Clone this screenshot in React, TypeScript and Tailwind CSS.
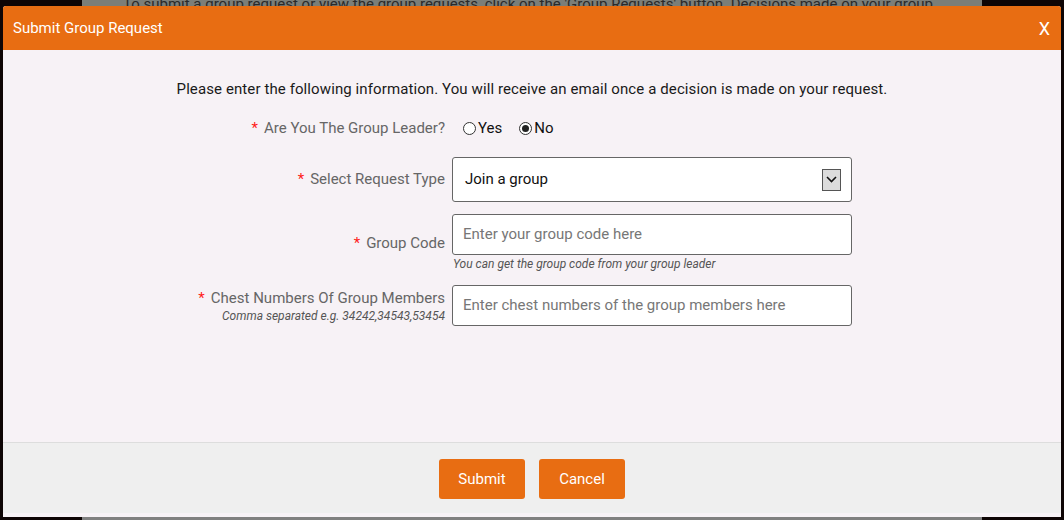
import React, { useState } from 'react';

const font = { fontFamily: 'Roboto, "Liberation Sans", sans-serif' };

const Req: React.FC = () => <span className="text-[#ff1a1a] mr-[6px]">*</span>;

const Radio: React.FC<{ checked: boolean; label: string; onClick: () => void }> = ({ checked, label, onClick }) => (
  <label className="flex items-center cursor-pointer" onClick={onClick}>
    <span className="w-[13px] h-[13px] rounded-full border border-[#333] bg-white flex items-center justify-center mr-[2px]">
      {checked && <span className="w-[7px] h-[7px] rounded-full bg-[#222]" />}
    </span>
    <span className="text-[15px] text-[#111]">{label}</span>
  </label>
);

const App: React.FC = () => {
  const [leader, setLeader] = useState<'yes' | 'no'>('no');

  return (
    <div className="relative w-[1064px] h-[520px] overflow-hidden bg-[#0e0505]" style={font}>
      {/* page behind the overlay */}
      <div className="ml-[82px] w-[900px] h-full bg-[#7b7e78]">
        <div className="-mt-[7px] pl-[41px] text-[15px] text-[#2a2a2a] whitespace-nowrap">
          To submit a group request or view the group requests, click on the 'Group Requests' button. Decisions made on your group
        </div>
      </div>
      <div className="absolute left-[82px] bottom-0 w-[900px] h-[3px] bg-[#808080]" />

      {/* Modal */}
      <div className="absolute left-[3px] top-[6px] w-[1058px] h-[511px] bg-[#f7f2f6] rounded-t-[3px] flex flex-col overflow-hidden">
        <div className="h-[44px] bg-[#e86d12] flex items-center justify-between pl-[10px] pr-[11px] text-white">
          <span className="text-[15px]">Submit Group Request</span>
          <span className="text-[18px] mt-px">X</span>
        </div>

        <div className="flex-1 flex flex-col">
          <p className="text-center text-[15px] text-[#1a1a1a] mt-[28px] leading-[22px] tracking-[0.1px]">
            Please enter the following information. You will receive an email once a decision is made on your request.
          </p>

          {/* leader */}
          <div className="flex items-center mt-[17px] h-[22px]">
            <div className="w-[442px] text-right text-[15px] text-[#666]">
              <Req />Are You The Group Leader?
            </div>
            <div className="flex items-center gap-[17px] ml-[18px]">
              <Radio checked={leader === 'yes'} label="Yes" onClick={() => setLeader('yes')} />
              <Radio checked={leader === 'no'} label="No" onClick={() => setLeader('no')} />
            </div>
          </div>

          {/* request type */}
          <div className="flex items-center mt-[18px]">
            <div className="w-[442px] text-right text-[15px] text-[#666]">
              <Req />Select Request Type
            </div>
            <div className="ml-[7px] w-[400px] h-[45px] bg-white border border-[#666] rounded-[3px] flex items-center justify-between pl-[12px] pr-[10px]">
              <span className="text-[15px] text-[#111]">Join a group</span>
              <span className="w-[19px] h-[22px] bg-[#dcdcdc] border border-[#555] flex items-center justify-center">
                <svg width="11" height="7" viewBox="0 0 11 7" fill="none">
                  <path d="M1 1l4.5 4.5L10 1" stroke="#111" strokeWidth="1.6" />
                </svg>
              </span>
            </div>
          </div>

          {/* group code */}
          <div className="flex items-center mt-[12px]">
            <div className="w-[442px] text-right text-[15px] text-[#666]">
              <Req />Group Code
            </div>
            <div className="ml-[7px] w-[400px]">
              <div className="h-[41px] bg-white border border-[#666] rounded-[3px] flex items-center px-[10px]">
                <span className="text-[15px] text-[#777]">Enter your group code here</span>
              </div>
              <div className="text-[12px] italic text-[#555] pl-px leading-[18px]">
                You can get the group code from your group leader
              </div>
            </div>
          </div>

          {/* chest numbers */}
          <div className="flex items-center mt-[12px]">
            <div className="w-[442px] text-right">
              <div className="text-[15px] text-[#666] leading-[20px]">
                <Req />Chest Numbers Of Group Members
              </div>
              <div className="text-[12px] italic text-[#555] leading-[16px]">
                Comma separated e.g. 34242,34543,53454
              </div>
            </div>
            <div className="ml-[7px] w-[400px] h-[41px] bg-white border border-[#666] rounded-[3px] flex items-center px-[10px]">
              <span className="text-[15px] text-[#777]">Enter chest numbers of the group members here</span>
            </div>
          </div>
        </div>

        <div className="h-[71px] bg-[#efefef] border-t border-[#dddddd] flex items-center justify-center gap-[14px] pt-[2px]">
          <button className="w-[86px] h-[40px] bg-[#e86d12] text-white text-[15px] rounded-[3px]">Submit</button>
          <button className="w-[86px] h-[40px] bg-[#e86d12] text-white text-[15px] rounded-[3px]">Cancel</button>
        </div>
        <div className="h-[4px]" />
      </div>
    </div>
  );
};

export default App;
